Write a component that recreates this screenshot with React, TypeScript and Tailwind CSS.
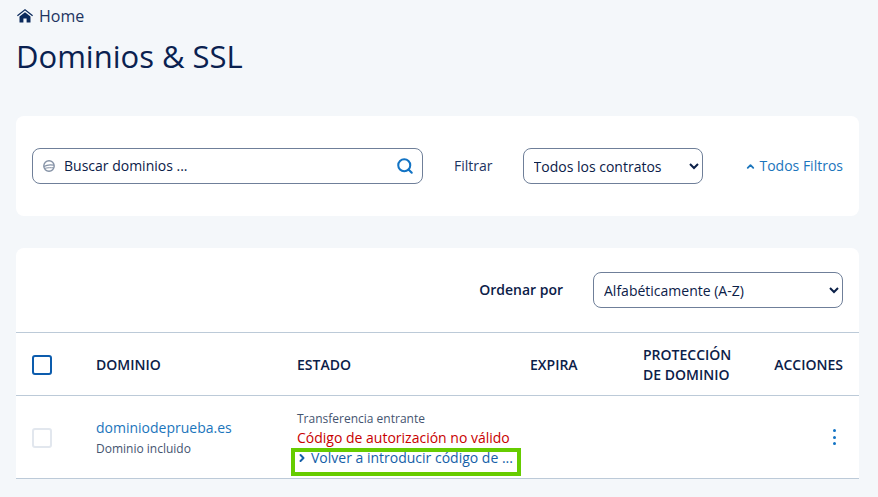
import React from 'react';
import { ChevronRight, ChevronUp, Search } from 'lucide-react';

const HomeIcon = () => (
  <svg viewBox="0 0 16 14" className="h-[14px] w-4 fill-[#0b2a5c]">
    <path d="M8 0 L0 6.2 L0.8 7.2 L8 1.6 L15.2 7.2 L16 6.2 Z" />
    <path d="M8 3.2 L2.5 7.6 V13.6 H6.4 V9.4 H9.6 V13.6 H13.5 V7.6 Z" />
  </svg>
);

const GlobeIcon = () => (
  <svg viewBox="0 0 12 12" className="h-3 w-3 fill-none stroke-[#8592a6]">
    <circle cx="6" cy="6" r="5.2" strokeWidth="1.4" />
    <path d="M1 6.4 C4 4.6 8 4.6 11 5.2" strokeWidth="1.2" />
    <path d="M1.6 8.4 C4.5 7.6 8 7.6 10.6 7.8" strokeWidth="1" />
  </svg>
);

const COLUMNS = 'grid grid-cols-[64px_201px_233px_113px_1fr] items-center px-4';

const App: React.FC = () => {
  return (
    <div className="h-[497px] w-[878px] overflow-hidden bg-[#f4f7fa] pl-4 pr-[19px] font-['Open_Sans',sans-serif] text-[#0b2048]">
      <div className="flex h-8 items-center gap-[6px] pl-px text-base text-[#1c3461]">
        <HomeIcon />
        <span>Home</span>
      </div>

      <h1 className="mt-[2px] text-[31px] leading-[44px] text-[#0a2150]">Dominios &amp; SSL</h1>

      <section className="mt-[38px] flex h-[100px] items-center rounded-lg bg-white px-4">
        <div className="flex h-9 w-[391px] items-center rounded-lg border border-[#6f7f99] pl-[10px] pr-2">
          <GlobeIcon />
          <span className="ml-[9px] flex-1 text-sm text-[#0b2048]">Buscar dominios ...</span>
          <Search className="h-[18px] w-[18px] text-[#1273c4]" strokeWidth={2.75} />
        </div>
        <span className="ml-[31px] text-sm text-[#1c3461]">Filtrar</span>
        <select className="ml-[30px] h-9 w-[180px] rounded-lg border border-[#6f7f99] bg-white px-[6px] text-sm text-[#0b2048]">
          <option>Todos los contratos</option>
        </select>
        <a className="ml-auto flex items-center gap-[3px] text-sm text-[#1b75bc]">
          <ChevronUp className="h-[11px] w-[11px]" strokeWidth={4} />
          Todos Filtros
        </a>
      </section>

      <section className="mt-8 h-[230px] rounded-t-lg bg-white">
        <div className="flex h-[84px] items-center justify-end px-4">
          <span className="text-sm font-semibold text-[#0b2048]">Ordenar por</span>
          <select className="ml-[30px] h-9 w-[250px] rounded-lg border border-[#6f7f99] bg-white px-[6px] text-sm text-[#0b2048]">
            <option>Alfabéticamente (A-Z)</option>
          </select>
        </div>

        <div className={`${COLUMNS} h-16 border-y border-[#bccad8] pt-[2px] text-sm font-semibold text-[#0b2048]`}>
          <div className="h-5 w-5 rounded-[3px] border-2 border-[#0c5cad]" />
          <div>DOMINIO</div>
          <div>ESTADO</div>
          <div>EXPIRA</div>
          <div className="flex items-center justify-between">
            <span className="leading-5">
              PROTECCIÓN
              <br />
              DE DOMINIO
            </span>
            <span>ACCIONES</span>
          </div>
        </div>

        <div className={`${COLUMNS} h-[83px] border-b border-[#bccad8]`}>
          <div className="mt-[2px] h-5 w-5 rounded-[3px] border-2 border-[#e2e7ee]" />
          <div className="pt-[2px]">
            <div className="text-sm leading-5 text-[#1b75bc]">dominiodeprueba.es</div>
            <div className="mt-[1px] text-xs leading-5 text-[#44546f]">Dominio incluido</div>
          </div>
          <div className="col-span-2 flex items-start justify-between pt-[3px]">
            <div>
              <div className="text-xs leading-[19px] text-[#44546f]">Transferencia entrante</div>
              <div className="text-sm leading-5 text-[#c80000]">Código de autorización no válido</div>
              <div className="relative flex h-5 items-center text-sm text-[#155fa8]">
                <ChevronRight className="-ml-px mr-[3px] h-3 w-3 text-[#155fa8]" strokeWidth={4} />
                Volver a introducir código de ...
                <span className="absolute -left-[6px] -right-[8px] top-0 -bottom-2 border-4 border-[#66cc00]" />
              </div>
            </div>
          </div>
          <div className="flex justify-end pr-[7px]">
            <div className="flex flex-col gap-[3.5px]">
              <span className="h-[3px] w-[3px] rounded-full bg-[#1273c4]" />
              <span className="h-[3px] w-[3px] rounded-full bg-[#1273c4]" />
              <span className="h-[3px] w-[3px] rounded-full bg-[#1273c4]" />
            </div>
          </div>
        </div>
      </section>
    </div>
  );
};

export default App;
